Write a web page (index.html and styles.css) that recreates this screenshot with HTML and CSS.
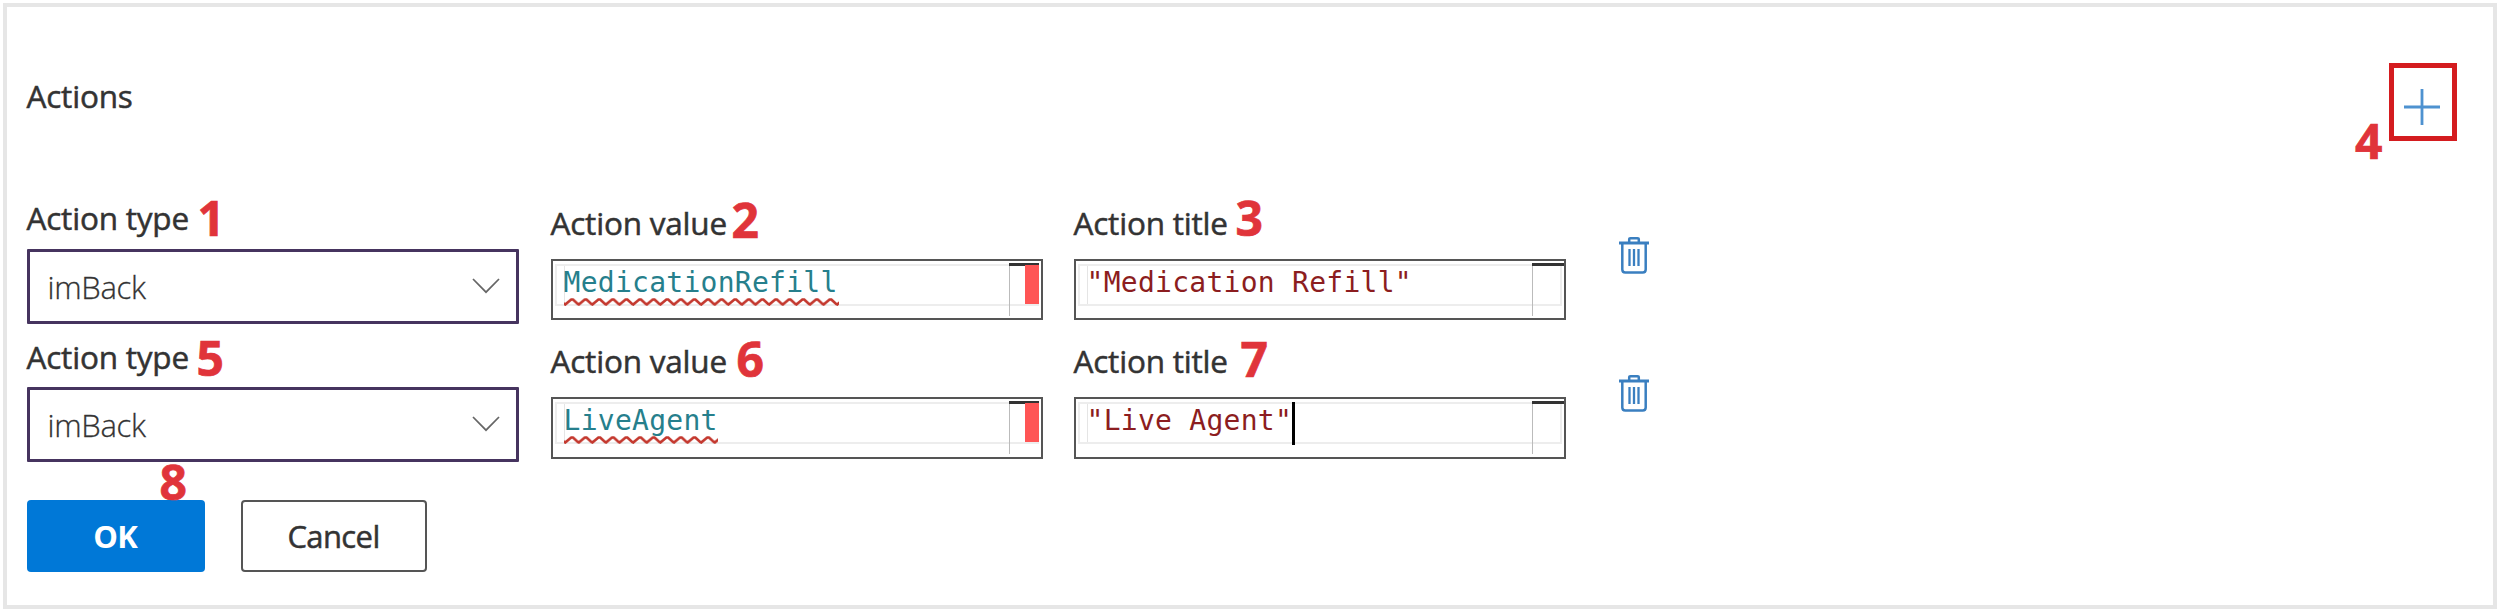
FILE: index.html
```html
<!DOCTYPE html>
<html lang="en">
<head>
<meta charset="utf-8">
<title>Actions</title>
<link rel="stylesheet" href="styles.css">
</head>
<body>
<svg width="0" height="0" class="defs">
  <defs>
    <pattern id="wave" width="13.6" height="8" patternUnits="userSpaceOnUse">
      <path d="M-1 5.2 L1.2 6.5 L7.2 1.5 L9 1.5 L13.6 5.8 L15 7" fill="none" stroke="#c4392f" stroke-width="2.7"/>
    </pattern>
    <symbol id="trash" viewBox="0 0 30 37">
      <g fill="none" stroke="#3a7fc0" stroke-width="2.5">
        <path d="M0 6 H30" stroke-width="3"/>
        <path d="M10.2 5 V2.5 Q10.2 1.3 11.5 1.3 H18.5 Q19.8 1.3 19.8 2.5 V5"/>
        <path d="M3.3 7 V32.5 Q3.3 35.5 6.3 35.5 H23.7 Q26.7 35.5 26.7 32.5 V7"/>
        <path d="M10.5 12 V29 M15 12 V29 M19.5 12 V29" stroke-width="2.3"/>
      </g>
    </symbol>
    <symbol id="chevron" viewBox="0 0 28 16">
      <path d="M1 1 L14 14.2 L27 1" fill="none" stroke="#666" stroke-width="1.7"/>
    </symbol>
  </defs>
</svg>
<main class="frame">
  <header class="header">
    <h1 class="label heading">Actions</h1>
    <div class="add">
      <svg width="36" height="36" viewBox="0 0 36 36"><path d="M0 18 H36 M18 0 V36" stroke="#2f7fc8" stroke-opacity=".85" stroke-width="2.8"/></svg>
      <b class="mark m4">4</b>
    </div>
  </header>

  <section class="row row-first">
    <div class="field type">
      <div class="label">Action type</div><b class="mark m1">1</b>
      <div class="select"><span>imBack</span><svg class="chev"><use href="#chevron"/></svg></div>
    </div>
    <div class="field value">
      <div class="label">Action value</div><b class="mark m2">2</b>
      <div class="editor">
        <div class="line"><span class="code ident">MedicationRefill</span></div>
        <svg class="squiggle" width="275" height="8"><rect width="275" height="8" fill="url(#wave)"/></svg>
        <i class="ruler"></i><i class="error"></i>
      </div>
    </div>
    <div class="field title">
      <div class="label">Action title</div><b class="mark m3">3</b>
      <div class="editor">
        <div class="line"><span class="code str">"Medication Refill"</span></div>
        <i class="ruler"></i>
      </div>
    </div>
    <svg class="trash"><use href="#trash"/></svg>
  </section>

  <section class="row row-second">
    <div class="field type">
      <div class="label">Action type</div><b class="mark m5">5</b>
      <div class="select"><span>imBack</span><svg class="chev"><use href="#chevron"/></svg></div>
    </div>
    <div class="field value">
      <div class="label">Action value</div><b class="mark m6">6</b>
      <div class="editor">
        <div class="line"><span class="code ident">LiveAgent</span></div>
        <svg class="squiggle" width="154" height="8"><rect width="154" height="8" fill="url(#wave)"/></svg>
        <i class="ruler"></i><i class="error"></i>
      </div>
    </div>
    <div class="field title">
      <div class="label">Action title</div><b class="mark m7">7</b>
      <div class="editor">
        <div class="line"><span class="code str">"Live Agent"</span><i class="cursor"></i></div>
        <i class="ruler"></i>
      </div>
    </div>
    <svg class="trash"><use href="#trash"/></svg>
  </section>

  <footer class="buttons">
    <b class="mark m8">8</b>
    <button class="btn ok">OK</button>
    <button class="btn cancel">Cancel</button>
  </footer>
</main>
</body>
</html>
```
FILE: styles.css
```css
* { box-sizing: border-box; }
body { margin: 0; background: #fff; font-family: "Open Sans", "Noto Sans", sans-serif; color: #333; }
.defs { position: absolute; }
.frame { margin: 3px; width: 2494px; height: 606px; border: 4px solid #e6e6e6; padding: 56px 36px 0 19.5px; }
.header { display: flex; justify-content: space-between; height: 139px; }
.label { margin: 0; font-size: 31.5px; font-weight: 500; line-height: 31px; height: 32px; letter-spacing: -0.2px; white-space: nowrap; -webkit-text-stroke: .5px #333; }
.heading { margin-top: 17px; }
.add { position: relative; width: 68px; height: 78px; border: 5.5px solid #d41c1f; display: flex; align-items: center; justify-content: center; padding: 9px 2px 0 0; }
.row { display: flex; align-items: flex-start; }
.row-first { height: 139px; }
.row-second { height: 159px; }
.field { position: relative; width: 492px; }
.value, .title { margin-left: 32px; padding-top: 5px; }
.title { margin-left: 31px; }
.row-second .value, .row-second .title { padding-top: 4px; }
.select { margin-top: 15px; height: 75px; border: 3px solid #46345f; border-radius: 1px; display: flex; align-items: center; justify-content: space-between; padding: 1px 16px 0 18px; font-size: 31px; font-weight: 300; letter-spacing: -0.3px; -webkit-text-stroke: .3px #333; }
.row-second .select { margin-top: 14px; }
.chev { width: 28px; height: 16px; margin-top: -2px; }
.editor { position: relative; margin-top: 20px; height: 61px; border: 2px solid #555; padding: 3px 2px; }
.row-second .editor { height: 62px; }
.line { height: 42px; border: 2px solid #ededed; padding-left: 7px; display: flex; position: relative; }
.line::before { content: ""; width: 1px; background: #e5e5e5; }
.code { font-family: "DejaVu Sans Mono", monospace; font-size: 28px; line-height: 33px; letter-spacing: 0.27px; white-space: pre; margin-left: -1px; }
.ident { color: #267f8c; }
.str { color: #8c1d20; }
.squiggle { position: absolute; left: 11px; top: 37px; }
.ruler { position: absolute; right: 0; top: 2px; width: 32px; height: 53px; border-top: 3px solid #333; }
.value .ruler { right: 2px; width: 30px; }
.ruler::before { content: ""; position: absolute; left: 0; top: 0; width: 1px; height: 50px; background: #bbb; }
.error { position: absolute; right: 2px; top: 4px; width: 14px; height: 39px; background: #ff5555; }
.cursor { width: 3px; height: 43px; margin-top: -2px; background: #000; }
.trash { width: 30px; height: 37px; margin: 35px 0 0 53px; }
.row-second .trash { margin-top: 34px; }
.buttons { position: relative; display: flex; gap: 36px; }
.btn { height: 72px; border-radius: 4px; font: 500 31px/1 "Open Sans", "Noto Sans", sans-serif; letter-spacing: -0.6px; padding: 0 1px 0 0; }
.ok { width: 178.5px; border: 0; background: #0078d7; color: #fff; font-weight: 700; }
.cancel { width: 186px; border: 2px solid #555; background: #fff; color: #333; -webkit-text-stroke: .5px #333; }
.mark { position: absolute; font-size: 48px; line-height: 48px; color: #e0343a; font-weight: 700; -webkit-text-stroke: .7px #e0343a; }
.m1 { left: 171px; top: -8px; }
.m2 { left: 181px; top: -6px; }
.m3 { left: 162px; top: -8px; }
.m4 { left: -39px; top: 49px; }
.m5 { left: 170px; top: -7px; }
.m6 { left: 186px; top: -6px; }
.m7 { left: 167px; top: -6px; }
.m8 { left: 133px; top: -42px; }
```
